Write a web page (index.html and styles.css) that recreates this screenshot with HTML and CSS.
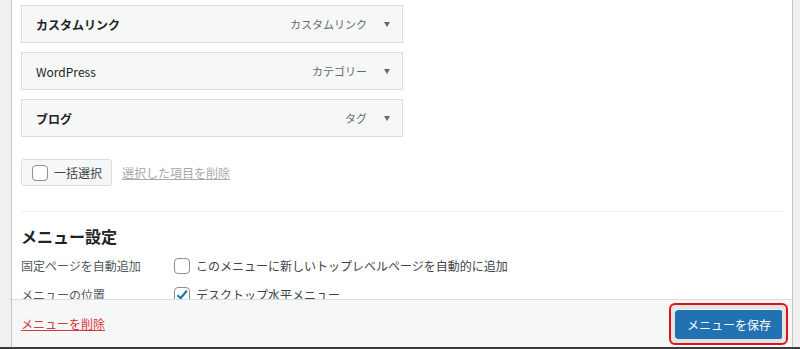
FILE: index.html
```html
<!DOCTYPE html>
<html lang="ja">
<head>
  <meta charset="UTF-8">
  <meta name="viewport" content="width=device-width, initial-scale=1.0">
  <title>メニュー</title>
  <link rel="stylesheet" href="styles.css">
</head>
<body>
  <div class="frame">
    <div class="content">
      <ul class="items">
        <li class="item">
          <span class="item-title">カスタムリンク</span>
          <span class="item-type">カスタムリンク</span>
          <span class="arrow"></span>
        </li>
        <li class="item">
          <span class="item-title plain">WordPress</span>
          <span class="item-type">カテゴリー</span>
          <span class="arrow"></span>
        </li>
        <li class="item">
          <span class="item-title">ブログ</span>
          <span class="item-type">タグ</span>
          <span class="arrow"></span>
        </li>
      </ul>

      <div class="bulk">
        <label class="bulk-btn"><span class="check"></span>一括選択</label>
        <a class="bulk-del" href="#">選択した項目を削除</a>
      </div>

      <div class="settings">
        <h3>メニュー設定</h3>
        <div class="row">
          <span class="row-label">固定ページを自動追加</span>
          <label class="row-value"><span class="check"></span>このメニューに新しいトップレベルページを自動的に追加</label>
        </div>
        <div class="row">
          <span class="row-label">メニューの位置</span>
          <label class="row-value"><span class="check on"><svg viewBox="0 0 16 16" width="16" height="16"><path d="M3.5 8.2 L6.6 11.2 L12.8 3.8" fill="none" stroke="#2271b1" stroke-width="2.2"/></svg></span>デスクトップ水平メニュー</label>
        </div>
      </div>
    </div>

    <div class="footer">
      <a class="del" href="#">メニューを削除</a>
      <button class="save">メニューを保存</button>
    </div>
  </div>
  <div class="bottom-bar"></div>
</body>
</html>
```

FILE: styles.css
```css
body {
  margin: 0;
  background-color: #f0f0f1;
  font-family: "Noto Sans CJK JP", "Noto Sans", sans-serif;
  font-size: 12px;
  color: #1d2327;
}

.frame {
  margin-left: 11px;
  width: 780px;
  height: 347px;
  background-color: white;
  border-left: 1px solid #c3c4c7;
  border-right: 1px solid #c3c4c7;
  display: flex;
  flex-direction: column;
}

.content {
  height: 299px;
  overflow: hidden;
  padding: 5px 9px 0 9px;
  box-sizing: border-box;
}

.items {
  list-style: none;
  margin: 0;
  padding: 0;
}

.item {
  width: 382px;
  height: 38px;
  box-sizing: border-box;
  background-color: #f6f7f7;
  border: 1px solid #dcdcde;
  margin-bottom: 9px;
  display: flex;
  align-items: center;
  padding: 0 12px 0 14px;
}

.item-title {
  font-weight: bold;
  flex: 1;
}

.item-title.plain {
  font-weight: normal;
}

.item-type {
  font-size: 11px;
  color: #646970;
  margin-right: 17px;
}

.arrow {
  width: 0;
  height: 0;
  border-left: 3.5px solid transparent;
  border-right: 3.5px solid transparent;
  border-top: 5px solid #646970;
}

.bulk {
  display: flex;
  align-items: center;
  margin-top: 22px;
}

.bulk-btn {
  display: flex;
  align-items: center;
  height: 27px;
  box-sizing: border-box;
  padding: 0 9px 0 10px;
  background-color: #f6f7f7;
  border: 1px solid #dcdcde;
  border-radius: 3px;
  color: #3c434a;
}

.bulk-del {
  margin-left: 10px;
  color: #a7aaad;
}

.check {
  display: inline-flex;
  width: 16px;
  height: 16px;
  box-sizing: border-box;
  border: 1px solid #8c8f94;
  border-radius: 4px;
  background-color: white;
  margin-right: 6px;
  position: relative;
}

.check svg {
  position: absolute;
  left: -1px;
  top: -1px;
}

.settings {
  margin-top: 25px;
  border-top: 1px solid #f0f0f1;
}

.settings h3 {
  margin: 13px 0 4px 0;
  font-size: 16px;
  line-height: 22px;
}

.row {
  display: flex;
  align-items: center;
  height: 29px;
}

.row-label {
  width: 153px;
  color: #50575e;
}

.row-value {
  display: flex;
  align-items: center;
  color: #3c434a;
}

.footer {
  height: 48px;
  box-sizing: border-box;
  border-top: 1px solid #dcdcde;
  background-color: #f6f7f7;
  display: flex;
  align-items: center;
  justify-content: space-between;
  padding: 0 9px;
}

.del {
  color: #d63638;
}

.save {
  position: relative;
  width: 108px;
  height: 29px;
  background-color: #2271b1;
  color: white;
  border: 1px solid #2271b1;
  border-radius: 3px;
  font-family: inherit;
  font-size: 12px;
  padding: 0;
  margin-top: 1px;
}

.save::after {
  content: "";
  position: absolute;
  left: -7px;
  right: -6px;
  top: -8px;
  bottom: -7px;
  border: 2px solid #e3101c;
  border-radius: 6px;
  box-shadow: inset 0 0 0 4px #e4e4e4;
}

.bottom-bar {
  height: 2px;
  background-color: #3c3c3c;
}
```
